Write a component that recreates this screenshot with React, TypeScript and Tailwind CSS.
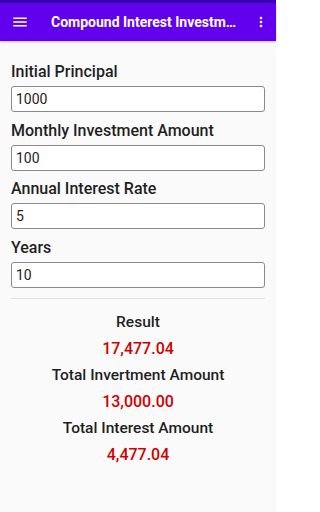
import { useState } from 'react';

function Field({ label, value, onChange }: { label: string; value: string; onChange: (v: string) => void }) {
  return (
    <div className="flex flex-col">
      <div className="text-[16px] leading-[20px] font-medium text-[#1f1f1f]">{label}</div>
      <input
        type="text"
        value={value}
        onChange={(e) => onChange(e.target.value)}
        className="mt-[4px] h-[26px] w-full rounded-[3px] border border-[#8a8a8a] bg-white px-[4px] text-[14px] text-[#2a1a1a] outline-none"
      />
    </div>
  );
}

export default function App() {
  const [principal, setPrincipal] = useState('1000');
  const [monthly, setMonthly] = useState('100');
  const [rate, setRate] = useState('5');
  const [years, setYears] = useState('10');

  return (
    <div className="flex h-[512px] w-[276px] flex-col bg-[#fafafa]" style={{ fontFamily: 'Roboto, "Noto Sans", sans-serif' }}>
      {/* Status bar */}
      <div className="h-[3px] bg-[#3700b3]" />

      {/* App bar */}
      <div className="flex h-[38px] items-center bg-[#6200ee] shadow-[0_1px_2px_rgba(0,0,0,0.25)]">
        <svg viewBox="0 0 24 24" className="ml-[11px] h-[18px] w-[18px] shrink-0 fill-white">
          <path d="M3 18h18v-2H3v2zm0-5h18v-2H3v2zm0-7v2h18V6H3z" />
        </svg>
        <div className="ml-[22px] mr-[15px] min-w-0 flex-1 truncate text-[14px] font-bold text-white">
          Compound Interest Investment Calculator
        </div>
        <svg viewBox="0 0 24 24" className="mr-[7px] h-[16px] w-[16px] shrink-0 fill-white">
          <path d="M12 8c1.1 0 2-.9 2-2s-.9-2-2-2-2 .9-2 2 .9 2 2 2zm0 2c-1.1 0-2 .9-2 2s.9 2 2 2 2-.9 2-2-.9-2-2-2zm0 6c-1.1 0-2 .9-2 2s.9 2 2 2 2-.9 2-2-.9-2-2-2z" />
        </svg>
      </div>

      {/* Form */}
      <div className="flex flex-col gap-[8.67px] px-[11px] pt-[21px]">
        <Field label="Initial Principal" value={principal} onChange={setPrincipal} />
        <Field label="Monthly Investment Amount" value={monthly} onChange={setMonthly} />
        <Field label="Annual Interest Rate" value={rate} onChange={setRate} />
        <Field label="Years" value={years} onChange={setYears} />
      </div>

      <div className="mx-[11px] mt-[10px] h-px bg-[#e2e2e2]" />

      {/* Results */}
      <div className="mt-[10px] flex flex-col items-center leading-[26.6px] font-medium">
        <div className="text-[15.5px] text-[#1f1f1f]">Result</div>
        <div className="text-[16px] text-[#d00000]">17,477.04</div>
        <div className="text-[15.5px] text-[#1f1f1f]">Total Invertment Amount</div>
        <div className="text-[16px] text-[#d00000]">13,000.00</div>
        <div className="text-[15.5px] text-[#1f1f1f]">Total Interest Amount</div>
        <div className="text-[16px] text-[#d00000]">4,477.04</div>
      </div>
    </div>
  );
}
